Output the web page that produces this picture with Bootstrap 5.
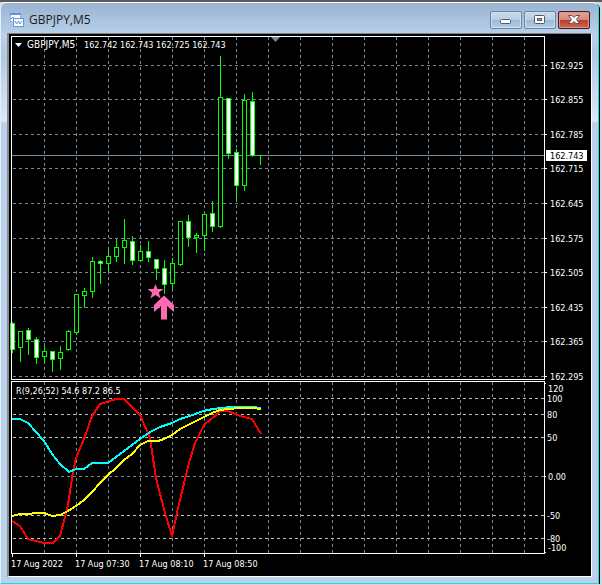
<!DOCTYPE html>
<html lang="en">
<head>
<meta charset="utf-8">
<meta name="viewport" content="width=device-width, initial-scale=1">
<title>GBPJPY,M5</title>
<link href="https://cdn.jsdelivr.net/npm/bootstrap@5.3.0/dist/css/bootstrap.min.css" rel="stylesheet">
<style>
body { background: #d4d8dc; border-top: 2px solid #5c5c5c; font-family: "Open Sans", sans-serif; }
.mdi { margin-right: 3px; border: 1px solid #fff; border-left-color: #e4eefa; border-right-color: #22d4ec; border-bottom-color: #22d4ec; border-radius: 6px 6px 0 0; padding: 0 6px 6px; background: linear-gradient(#99b4d1, #b9d1ea 32px, #b0c8e2 50px, #dce9f8 118px, #b9d1ea 120px); box-shadow: 1px 1px 0 #000; }
.title-bar { height: 30px; padding: 4px 2px 0 3px; }
.title-text { font-size: 12px; line-height: 16px; color: #1b1b1b; }
.win-buttons { gap: 2px; }
.win-btn { width: 32px; height: 18px; border: 1px solid #6c84a3; border-radius: 2px; background: linear-gradient(#c9dbee, #b7cde4 50%, #9bb8d6 50%, #b7cfe9); box-shadow: inset 0 0 0 1px #d0dfef; }
.win-close { border-color: #4b1622; background: linear-gradient(#e5a598, #d6877a 50%, #b93c22 50%, #cf6a50); box-shadow: inset 0 0 0 1px #e09488; }
.chart-box { background: #000; border: solid; border-width: 1px 1px 1px 2px; border-color: #808080 #fff #fff #8c8c8c; }
.chart-box text { font-family: "DejaVu Sans Condensed", "DejaVu Sans", sans-serif; font-size: 9px; fill: #fff; }
.chart-box text.symbol-name { font-size: 10px; }
.chart-box text.quote-now { fill: #000; }
</style>
<script src="https://cdn.jsdelivr.net/npm/bootstrap@5.3.0/dist/js/bootstrap.bundle.min.js"></script>
</head>
<body>
<main class="mdi">
  <header class="title-bar d-flex align-items-center justify-content-between">
    <div class="d-flex align-items-center gap-1">
      <svg width="15" height="14" viewBox="0 0 15 14" aria-hidden="true">
        <path d="M.5 .5h10v8H.5z" fill="#fff" stroke="#6a9fe6" stroke-dasharray="2 1"/>
        <path d="M0 0h11v2H0z" fill="#5b93dd"/>
        <path d="M1 6l2-2 1 2" fill="none" stroke="#5b93dd"/>
        <path d="M3.500 5.500h10v8h-10z" fill="#fff" stroke="#5b93dd"/>
        <path d="M3 5h11v1H3z" fill="#5b93dd"/>
        <path d="M5 8l1.500 3 2-3 1.500 3 2-3" fill="none" stroke="#5b93dd"/>
      </svg>
      <span class="title-text">GBPJPY,M5</span>
    </div>
    <div class="win-buttons d-flex">
      <button type="button" class="win-btn p-0 d-flex align-items-center justify-content-center" aria-label="Minimize">
        <svg width="12" height="12" viewBox="0 0 12 12"><rect x=".5" y="5.500" width="10" height="4" rx="1" fill="#fff" stroke="#535666"/></svg>
      </button>
      <button type="button" class="win-btn p-0 d-flex align-items-center justify-content-center" aria-label="Restore">
        <svg width="12" height="12" viewBox="0 0 12 12"><rect x=".5" y="1.500" width="10" height="8" rx="1" fill="#fff" stroke="#535666"/><rect x="3.500" y="4.500" width="4" height="2" fill="#8fb0d2" stroke="#535666"/></svg>
      </button>
      <button type="button" class="win-btn win-close p-0 d-flex align-items-center justify-content-center" aria-label="Close">
        <svg width="12" height="12" viewBox="0 0 12 12"><path d="M.5 1.500h3.500L6 3.500l2-2h3.500L8.500 5.500l3 4H8L6 7.500l-2 2H.5l3-4z" fill="#fff" stroke="#535666"/></svg>
      </button>
    </div>
  </header>
  <section class="chart-box">
    <svg id="chart" class="d-block w-100 h-auto" viewBox="9 34 582 542" role="img" aria-label="GBPJPY five minute candlestick chart with oscillator"></svg>
  </section>
</main>
<script>
const svg = document.getElementById('chart');
const add = (tag, attrs, text) => {
  const el = document.createElementNS('http://www.w3.org/2000/svg', tag);
  for (const k in attrs) el.setAttribute(k, attrs[k]);
  if (text) el.textContent = text;
  svg.appendChild(el);
};
const line = (d, stroke, extra) => add('path', { d, stroke, fill: 'none', 'shape-rendering': 'crispEdges', ...extra });
const label = (x, y, text, cls) => add('text', { x, y, class: cls || '' }, text);
const dash = { 'stroke-dasharray': '3 3' };

// Grid
for (let x = 44; x < 544; x += 32) {
  line(`M${x}.5 37V379`, '#778899', dash);
  line(`M${x}.5 382V554`, '#778899', dash);
}
const prices = [[65, '162.925'], [99, '162.855'], [134, '162.785'], [168, '162.715'], [203, '162.645'], [238, '162.575'], [272, '162.505'], [307, '162.435'], [341, '162.365'], [376, '162.295']];
prices.forEach(([y, t]) => {
  line(`M13 ${y}.5H544`, '#778899', dash);
  line(`M545 ${y}.5h2`, '#fff');
  label(550, y + 4, t);
});
[398, 414, 437, 476, 515, 538].forEach(y => line(`M13 ${y}.5H544`, y === 476 ? '#778899' : '#c0c0c0', dash));
[[392, '120', 548], [402, '100', 547], [418, '80', 547], [441, '50', 547], [480, '0.00', 548], [519, '-50', 547], [542, '-80', 547], [551, '-100', 548]].forEach(([y, t, x]) => label(x, y, t));

// Current price
line('M12 155.5H545', '#778899');

// Candles: x, wick top, wick bottom, body top, body bottom, filled
[[12,322,352,323,349,1],[20,331,361,331,347,0],[28,328,354,330,339,1],[36,337,363,339,357,1],[44,346,362,351,356,0],
 [52,351,371,351,359,1],[60,346,369,352,358,0],[68,330,350,331,349,0],[76,294,334,294,332,0],[84,288,307,291,295,0],
 [92,257,297,261,291,0],[100,260,283,261,263,1],[108,250,271,256,263,0],[116,239,261,247,256,0],[124,219,263,240,247,0],
 [132,236,264,241,260,1],[140,245,261,251,260,0],[148,241,261,251,257,1],[156,259,279,259,268,1],[164,260,293,268,284,1],
 [172,258,288,263,283,0],[180,221,265,221,264,0],[188,215,246,221,237,1],[196,233,252,235,237,0],[204,214,250,214,235,0],
 [212,201,231,213,226,1],[220,56,227,97,226,0],[228,98,158,98,153,1],[236,149,200,152,185,1],[244,94,190,100,185,0],
 [252,92,156,101,155,1],[260,155,164,155,155,0]].forEach(([x, h, l, t, b, f]) => {
  line(`M${x}.5 ${h}V${l + 1}`, '#0f0');
  if (b > t) add('rect', { x: x - 1.5, y: t + .5, width: 4, height: b - t, fill: f ? '#fff' : '#000', stroke: '#0f0', 'shape-rendering': 'crispEdges' });
  else line(`M${x - 2} ${t}.5h5`, '#0f0');
});

// Signal marks
add('path', { d: 'M155.500 284l1.900 5h6.100l-4.700 3.700 1.900 5.800-5.200-3.500-5.200 3.500 1.900-5.800-4.700-3.700h6.100z', fill: '#ff69b4' });
add('path', { d: 'M164 295.500l10 9.500v7l-7-6v13.500h-6V306l-7 6v-7z', fill: '#ff69b4' });

// Oscillator lines
const curve = (points, stroke) => line('M' + points, stroke, { 'stroke-width': 2, 'stroke-linejoin': 'round' });
curve('12,521 20,526 28,539 36,541 44,543 53,543 60,536 64,521 68,505 73,472 76,458 84,439 92,416 100,404 116,399 124,399 132,407 140,415 150,438 156,478 165,513 172,536 178,508 189,463 195,443 204,425 215,416 220,411 228,411 240,416 252,419 261,434', '#f00');
curve('12,419 20,419 28,423 36,432 44,441 52,454 60,464 69,472 76,469 84,469 92,463 108,463 116,457 124,451 132,445 140,439 150,432 160,427 172,423 180,419 190,416 203,411 213,409 230,407 252,407 261,408', '#0ff');
curve('12,516 20,514 44,513 52,516 60,515 68,511 76,506 84,500 92,492 100,483 108,475 116,468 124,460 132,454 140,445 148,441 158,441 164,439 172,435 180,429 190,424 196,421 204,417 212,413 220,410 228,409 240,408 252,408 261,409', '#ff0');

// Frames and ticks
line('M11.500 36.500H544.500V379.500H11.500z', '#fff');
line('M11.500 381.500H544.500V553.500H11.500z', '#fff');
line('M545 383.500h1M545 552.500h1M545 476.500h1', '#fff');
[12, 76, 140, 204].forEach(x => line(`M${x}.5 554v3`, '#fff'));

// Captions
add('path', { d: 'M271 37h9l-4.500 5z', fill: '#778899' });
add('path', { d: 'M15 43h7l-3.500 4z', fill: '#fff' });
label(27, 48, 'GBPJPY,M5', 'symbol-name');
label(84, 48, '162.742 162.743 162.725 162.743');
label(16, 394, 'R(9,26,52) 54.6 87.2 86.5');
label(11, 567, '17 Aug 2022');
label(75, 567, '17 Aug 07:30');
label(139, 567, '17 Aug 08:10');
label(203, 567, '17 Aug 08:50');
add('rect', { x: 546, y: 150, width: 41, height: 11, fill: '#fff' });
label(550, 159, '162.743', 'quote-now');
</script>
</body>
</html>
